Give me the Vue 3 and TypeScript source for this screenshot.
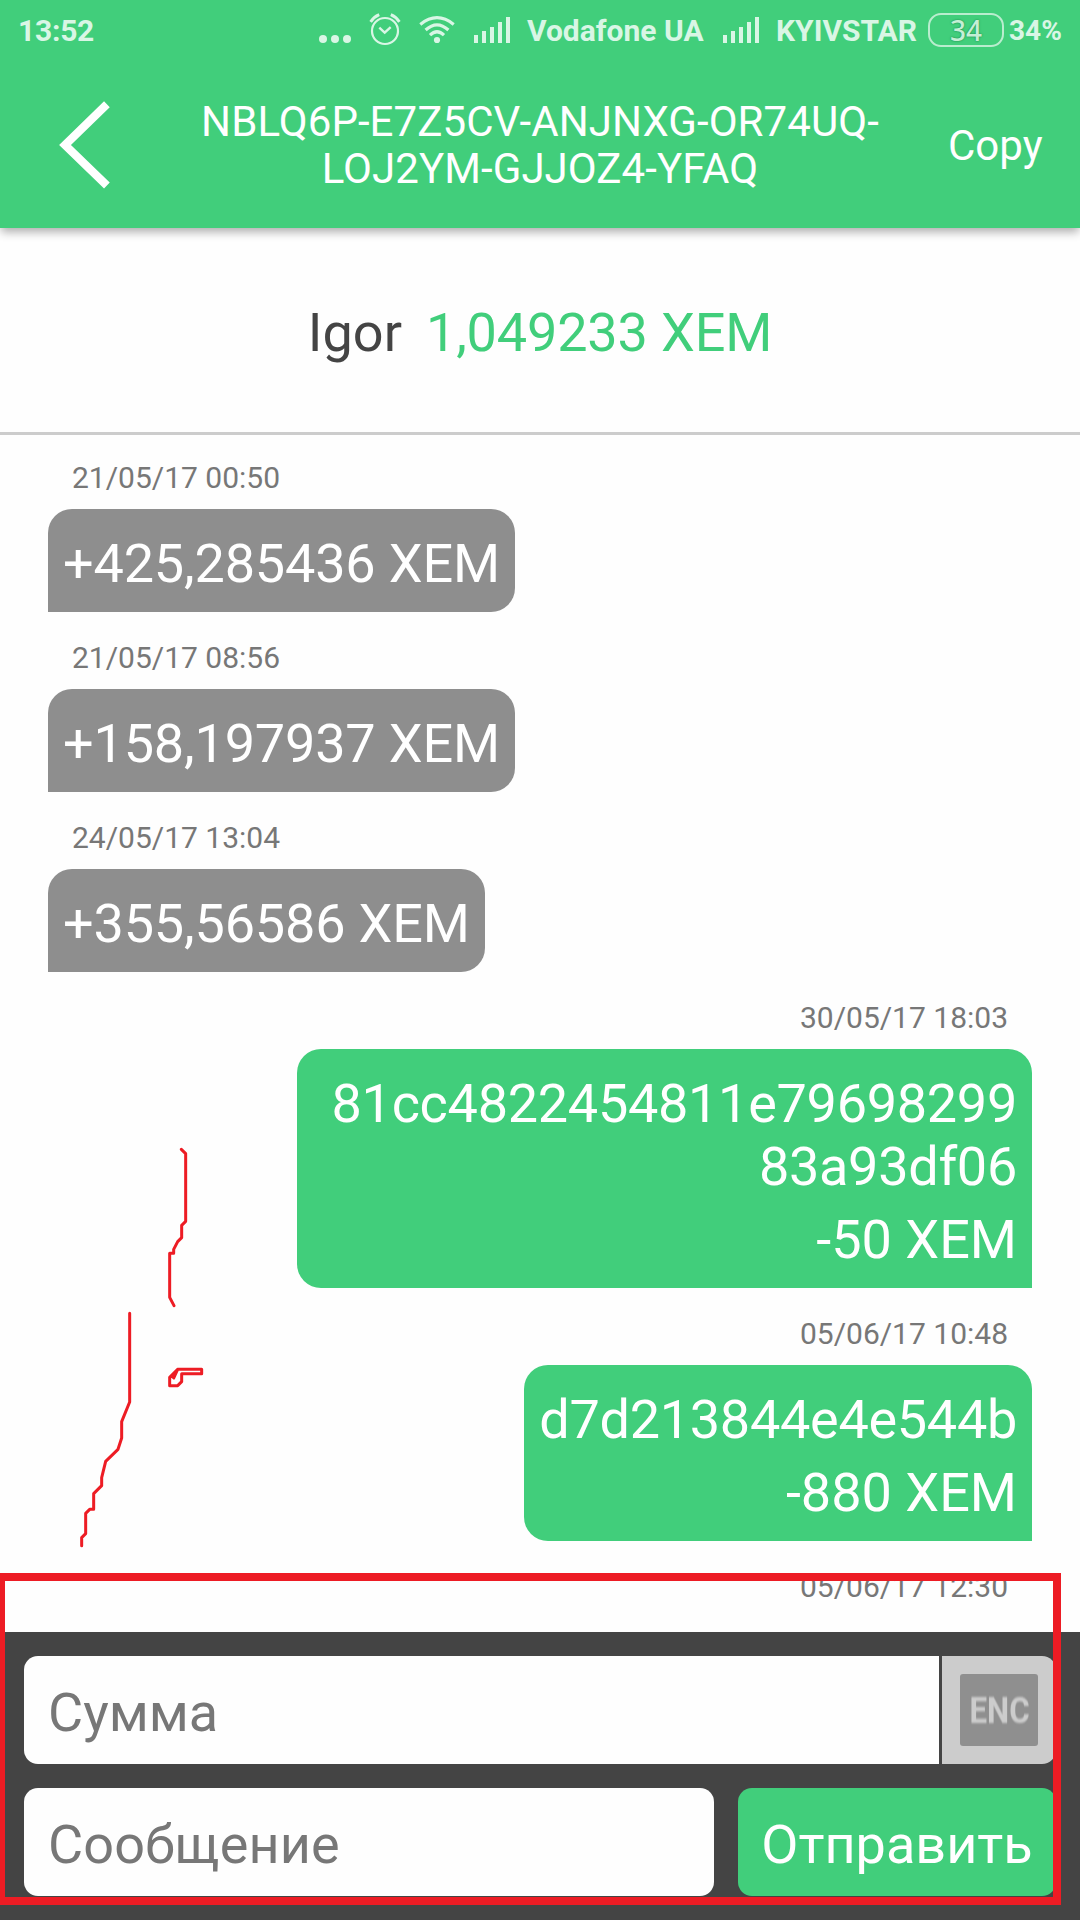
<script setup lang="ts">
interface Entry {
  id: number
  date: string
  outgoing: boolean
  message?: string
  amount?: string
}

const address: string[] = ['NBLQ6P-E7Z5CV-ANJNXG-OR74UQ-', 'LOJ2YM-GJJOZ4-YFAQ']

const entries: Entry[] = [
  { id: 1, date: '21/05/17 00:50', outgoing: false, amount: '+425,285436 XEM' },
  { id: 2, date: '21/05/17 08:56', outgoing: false, amount: '+158,197937 XEM' },
  { id: 3, date: '24/05/17 13:04', outgoing: false, amount: '+355,56586 XEM' },
  { id: 4, date: '30/05/17 18:03', outgoing: true, message: '81cc4822454811e7969829983a93df06', amount: '-50 XEM' },
  { id: 5, date: '05/06/17 10:48', outgoing: true, message: 'd7d213844e4e544b', amount: '-880 XEM' },
  { id: 6, date: '05/06/17 12:30', outgoing: true },
]
</script>

<template>
  <div class="screen">
    <header class="header">
      <div class="status">
        <span class="clock">13:52</span>
        <svg class="dots" width="32" height="8" viewBox="0 0 32 8">
          <circle cx="4" cy="4" r="4" /><circle cx="16" cy="4" r="4" /><circle cx="28" cy="4" r="4" />
        </svg>
        <svg class="alarm" width="32" height="34" viewBox="0 0 32 34" fill="none">
          <circle cx="16" cy="19" r="13" stroke-width="2.2" />
          <path d="M10.3 15.6 L15.7 20.6 L21.7 15.2" stroke-width="2.4" />
          <path d="M1.6 9.8 Q5 4.8 10.2 2.6 M30.4 9.8 Q27 4.8 21.8 2.6" stroke-width="3" />
        </svg>
        <svg class="wifi" width="36" height="28" viewBox="0 0 36 28" fill="none">
          <path d="M1.3 8.4 Q18 -5 34.7 8.4" stroke-width="3.2" />
          <path d="M6.6 14 Q18 3.6 29.4 14" stroke-width="3.2" />
          <path d="M11 19.2 Q18 12.4 25 19.2" stroke-width="3.2" />
          <circle class="solid" cx="18" cy="24" r="3.1" />
        </svg>
        <svg class="bars" width="36" height="26" viewBox="0 0 36 26">
          <path d="M0 18h4v8h-4z M8 14h4v12h-4z M16 10h4v16h-4z M24 5h4v21h-4z M32 0h4v26h-4z" />
        </svg>
        <span class="carrier first">Vodafone UA</span>
        <svg class="bars" width="36" height="26" viewBox="0 0 36 26">
          <path d="M0 18h4v8h-4z M8 14h4v12h-4z M16 10h4v16h-4z M24 5h4v21h-4z M32 0h4v26h-4z" />
        </svg>
        <span class="carrier second">KYIVSTAR</span>
        <span class="battery">34</span>
        <span class="percent">34%</span>
      </div>
      <div class="toolbar">
        <svg class="back" width="52" height="88" viewBox="0 0 52 88" fill="none">
          <path d="M47.9 3.3 L6 44 L47.9 84.5" stroke="#fff" stroke-width="8.2" />
        </svg>
        <div class="address">
          <div v-for="line in address" :key="line">{{ line }}</div>
        </div>
        <span class="copy">Copy</span>
      </div>
    </header>

    <section class="balance">
      <span class="name">Igor</span>
      <span class="total">1,049233 XEM</span>
    </section>

    <main class="list">
      <article v-for="entry in entries" :key="entry.id" class="entry" :class="{ outgoing: entry.outgoing }">
        <time class="date">{{ entry.date }}</time>
        <div v-if="entry.amount" class="bubble">
          <div v-if="entry.message" class="message">{{ entry.message }}</div>
          <div class="amount">{{ entry.amount }}</div>
        </div>
      </article>
    </main>

    <footer class="composer">
      <div class="row amount-row">
        <div class="field sum">Сумма</div>
        <div class="enc"><span class="enc-icon"><span class="enc-label">ENC</span></span></div>
      </div>
      <div class="row message-row">
        <div class="field note">Сообщение</div>
        <div class="send">Отправить</div>
      </div>
    </footer>

    <svg class="scribble" width="200" height="440" viewBox="0 0 600 1320" fill="none">
      <path d="M364 58 L377 71 V274 L365 286 V323 L353 335 L341 358 V370 H329 V502 L342 527" />
      <path d="M209 550 V816 L185 875 V924 L174 958 L137 994 L125 1043 V1067 L101 1091 V1138 H89 L77 1150 V1211 L65 1223 V1247" />
      <path d="M341 744 L353 718 H425 V731 H365 V755 L353 767 H329 V742 L353 718 L337 740" />
    </svg>
    <div class="frame"></div>
  </div>
</template>

<style>
body {
  margin: 0;
  background: #fefefe;
}
</style>

<style scoped>
.screen {
  position: relative;
  display: flex;
  flex-direction: column;
  width: 1080px;
  height: 1920px;
  overflow: hidden;
  background: #fefefe;
  font-family: Roboto, 'Noto Sans', sans-serif;
  white-space: nowrap;
}
.header {
  flex: none;
  height: 228px;
  background: #41ce7b;
  color: #fff;
  box-shadow: 0 5px 9px -1px rgba(0, 0, 0, 0.32);
}
.status {
  display: flex;
  align-items: flex-start;
  height: 62px;
  color: #d9f6e5;
  font-size: 30px;
  font-weight: 700;
  line-height: 36px;
}
.status svg {
  flex: none;
  fill: #d9f6e5;
}
.status svg.alarm,
.status svg.wifi {
  fill: none;
  stroke: #d9f6e5;
}
.status svg .solid {
  fill: #d9f6e5;
  stroke: none;
}
.clock {
  width: 301px;
  margin: 13px 0 0 18px;
  letter-spacing: -0.25px;
}
.dots {
  margin-top: 35px;
}
.alarm {
  margin: 12px 0 0 18px;
}
.wifi {
  margin: 16px 0 0 18px;
}
.bars {
  margin-top: 17px;
}
.wifi + .bars {
  margin-left: 19px;
}
.carrier {
  margin-top: 13px;
}
.first {
  width: 196px;
  margin-left: 17px;
}
.second {
  width: 152px;
  margin-left: 17px;
}
.battery {
  box-sizing: border-box;
  flex: none;
  width: 76px;
  height: 34px;
  margin: 13px 5px 0 0;
  border: 2px solid #b9edce;
  border-radius: 13px;
  color: #c4efd5;
  font: 500 28px/31px 'Noto Sans', sans-serif;
  text-align: center;
  text-shadow: 0 0 2px #187a40;
}
.percent {
  margin-top: 13px;
  font-size: 28px;
}
.toolbar {
  display: flex;
  align-items: center;
  height: 166px;
  font-size: 42px;
}
.back {
  flex: none;
  margin-left: 59px;
}
.address {
  width: 690px;
  margin-left: 84px;
  letter-spacing: 0.07px;
  line-height: 47px;
  text-align: center;
}
.copy {
  margin-left: 63px;
  line-height: 49px;
}
.balance {
  display: flex;
  flex: none;
  justify-content: center;
  align-items: center;
  box-sizing: border-box;
  height: 207px;
  padding-top: 5px;
  border-bottom: 3px solid #ccc;
  font-size: 54px;
  line-height: 63px;
}
.name {
  margin-right: 24px;
  color: #444;
}
.total {
  color: #41ce7b;
  letter-spacing: -0.16px;
}
.list {
  display: flex;
  flex: 1;
  flex-direction: column;
  gap: 28px;
  min-height: 0;
  padding: 25px 48px 0;
  overflow: hidden;
}
.entry {
  display: flex;
  flex: none;
  flex-direction: column;
  align-items: flex-start;
}
.outgoing {
  align-items: flex-end;
  text-align: right;
}
.date {
  margin: 0 24px 14px;
  color: #777;
  font-size: 30px;
  line-height: 35px;
}
.bubble {
  box-sizing: border-box;
  max-width: 735px;
  padding: 23px 15px 17px;
  border-radius: 24px 24px 24px 0;
  background: #8e8e8e;
  color: #fff;
  font-size: 54px;
  letter-spacing: -0.17px;
  line-height: 63px;
}
.outgoing .bubble {
  border-radius: 24px 24px 0 24px;
  background: #41ce7b;
  letter-spacing: 0;
}
.message {
  margin-bottom: 10px;
  letter-spacing: -0.29px;
  white-space: normal;
  word-break: break-all;
}
.composer {
  box-sizing: border-box;
  display: flex;
  flex: none;
  flex-direction: column;
  gap: 24px;
  height: 288px;
  padding: 24px;
  background: #444;
  font-size: 54px;
  line-height: 63px;
}
.row {
  display: flex;
  height: 108px;
}
.amount-row {
  gap: 3px;
}
.message-row {
  gap: 24px;
}
.field,
.send {
  box-sizing: border-box;
  padding: 25px 24px 0;
  border-radius: 14px;
}
.field {
  background: #fefefe;
  color: #777;
}
.sum {
  width: 915px;
  border-radius: 14px 0 0 14px;
}
.note {
  width: 690px;
  letter-spacing: 0.1px;
}
.enc {
  display: flex;
  align-items: center;
  box-sizing: border-box;
  width: 114px;
  padding-left: 18px;
  border-radius: 0 14px 14px 0;
  background: #ccc;
}
.enc-icon {
  display: flex;
  align-items: center;
  justify-content: center;
  width: 78px;
  height: 72px;
  border-radius: 3px;
  background: #8f8f8f;
}
.enc-label {
  color: #ccc;
  font-size: 36px;
  font-weight: 700;
  line-height: 42px;
  transform: translate(1px, 1px) scaleX(0.87);
  filter: blur(0.9px);
}
.send {
  width: 318px;
  padding: 25px 0 0;
  background: #41ce7b;
  color: #fff;
  text-align: center;
}
.scribble {
  position: absolute;
  top: 1130px;
  left: 60px;
}
.scribble path {
  stroke: #ed1c24;
  stroke-width: 9;
  stroke-linecap: round;
  stroke-linejoin: round;
}
.frame {
  position: absolute;
  top: 1573px;
  left: 0;
  box-sizing: border-box;
  width: 1061px;
  height: 332px;
  border: 8px solid #ed1c24;
  border-left-width: 5px;
}
</style>
